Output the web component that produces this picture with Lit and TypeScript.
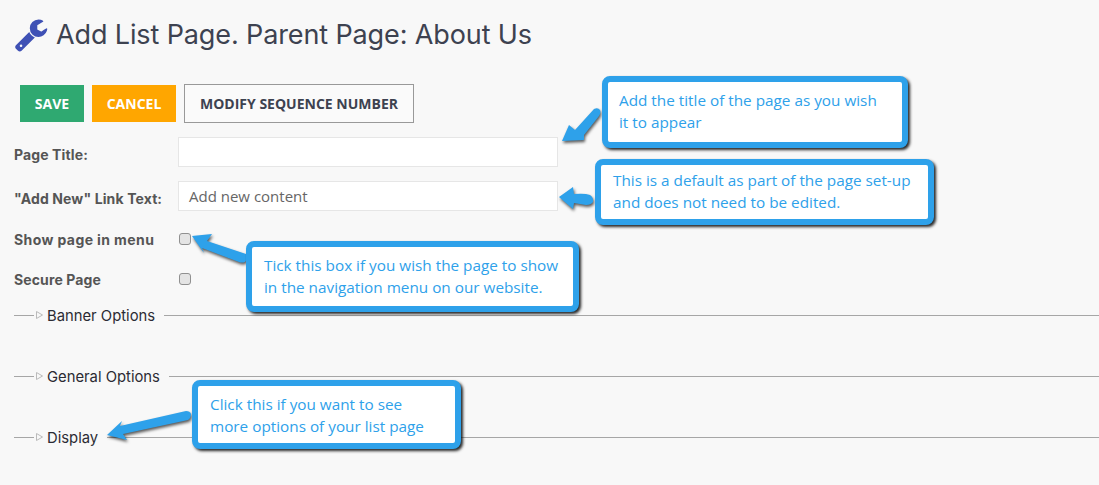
import { LitElement, html, css, svg } from "lit";
import { customElement } from "lit/decorators.js";

const WRENCH = "M424 1472q0-26-19-45t-45-19-45 19-19 45 19 45 45 19 45-19 19-45zm644-420l-682 682q-37 37-90 37-52 0-91-37l-106-108q-38-36-38-90 0-53 38-91l681-681q39 98 114.5 173.5t173.5 114.5zm634-435q0 39-23 106-47 134-164.5 217.5t-258.5 83.5q-185 0-316.5-131.5t-131.5-316.5 131.5-316.5 316.5-131.5q58 0 121.5 16.5t107.5 46.5q16 11 16 28t-16 28l-293 169v224l193 107q5-3 79-48.5t135.5-81 70.5-35.5q15 0 23.5 10t8.5 25z";

const ARROWS = [
  "M562 141 L569 125 L575 130 L594 109 Q598 107 600 110 Q601 113 599 116 L584 135 L584 140 Z",
  "M559 197 L573 187 L574 194 Q585 193 590 195 Q594 198 593 202 Q591 205 586 205 L574 203 L573 209 Z",
  "M192 236 L212 234 L207 241 L246 254 Q248 259 245 262 Q242 263 239 262 L202 248 L204 253 Z",
  "M107 435 L122 421 L120 426 L186 411 Q190 411 191 414 Q191 418 188 420 L123 434 L127 440 Z",
];

const CALLOUTS = [
  { cls: "c1", lines: ["Add the title of the page as you wish", "it to appear"] },
  { cls: "c2", lines: ["This is a default as part of the page set-up", "and does not need to be edited."] },
  { cls: "c3", lines: ["Tick this box if you wish the page to show", "in the navigation menu on our website."] },
  { cls: "c4", lines: ["Click this if you want to see", "more options of your list page"] },
];

@customElement("app-root")
export class AppRoot extends LitElement {
  static styles = css`
    :host {
      display: block;
      position: relative;
      width: 1099px;
      height: 485px;
      overflow: hidden;
      background: #f8f8f8;
      font-family: "Inter", "Liberation Sans", sans-serif;
      color: #444;
    }
    .page { display: flex; flex-direction: column; padding: 0 0 0 14px; }
    .head { display: flex; align-items: center; height: 34px; margin-top: 17px; gap: 7px; }
    .wrench { width: 35px; height: 35px; fill: #3f51b5; flex: none; }
    h1 {
      margin: 0;
      font-size: 27px;
      font-weight: 400;
      color: #3d4250;
      letter-spacing: -0.12px;
      white-space: nowrap;
    }
    .buttons { display: flex; align-items: center; gap: 8px; margin: 33px 0 0 6px; height: 39px; }
    .btn {
      display: flex;
      align-items: center;
      justify-content: center;
      box-sizing: border-box;
      font-family: "Open Sans", sans-serif;
      font-weight: 700;
      font-size: 14px;
      height: 37px;
      color: #fff;
    }
    .save { width: 64px; background: #2fa971; }
    .cancel { width: 84px; background: #ffa600; }
    .modify { width: 230px; height: 39px; color: #3d4250; border: 1px solid #999; background: #fafafa; }
    .row { display: flex; align-items: center; }
    .label { width: 164px; font-size: 14px; letter-spacing: 0.12px; font-weight: 700; color: #555; white-space: nowrap; flex: none; }
    .low { padding-top: 5px; }
    .high { padding-bottom: 2px; }
    .wide { letter-spacing: 0.4px; }
    .input {
      box-sizing: border-box;
      width: 380px;
      height: 30px;
      border: 1px solid #e6e6e6;
      background: #fff;
      padding: 0 10px;
      font-family: "Open Sans", sans-serif;
      font-size: 15px;
      line-height: 28px;
      color: #666;
    }
    .r1 { margin-top: 14px; }
    .r2 { margin-top: 14px; }
    .r3 { margin-top: 11px; height: 36px; }
    .r4 { margin-top: 4px; height: 36px; }
    .check {
      box-sizing: border-box;
      width: 12px;
      height: 12px;
      margin: 0 0 3px 1px;
      border: 1px solid #909090;
      border-radius: 3px;
      background: #e4e4e4;
      appearance: none;
    }
    .divider { display: flex; align-items: center; height: 20px; }
    .d1 { margin-top: 7px; }
    .d2 { margin-top: 41px; }
    .d3 { margin-top: 41px; }
    .rule { height: 1px; background: #a6a6a6; }
    .rule.short { width: 20px; flex: none; }
    .rule.long { flex: 1; margin-left: 9px; }
    .tri { width: 9px; height: 10px; margin: 0 3px 0 1px; flex: none; fill: none; stroke: #bbb; }
    .legend { font-size: 14.8px; color: #2b2b33; white-space: nowrap; padding-top: 1px; line-height: 18px; }
    .arrows { position: absolute; left: 0; top: 0; width: 1099px; height: 485px; pointer-events: none; }
    .arrows path { fill: #2ea1ea; filter: drop-shadow(1.5px 2px 1.5px rgba(0,0,0,.65)); }
    .callout {
      position: absolute;
      box-sizing: border-box;
      border: 6px solid #2ea1ea;
      border-radius: 8px;
      background: #fff;
      box-shadow: 2px 2px 3px rgba(0,0,0,.85);
      font-family: "Open Sans", sans-serif;
      font-size: 15.3px;
      line-height: 22px;
      color: #2ea1ea;
      white-space: nowrap;
    }
    .c1 { left: 602px; top: 76px; width: 306px; height: 72px; padding: 7px 0 0 11px; }
    .c2 { left: 595px; top: 159px; width: 339px; height: 66px; padding: 4px 0 0 12px; }
    .c3 { left: 246px; top: 241px; width: 333px; height: 71px; padding: 7px 0 0 12px; }
    .c4 { left: 192px; top: 380px; width: 269px; height: 69px; padding: 7px 0 0 12px; }
  `;

  private divider(text: string, cls: string) {
    return html`<div class="divider ${cls}">
      <div class="rule short"></div>
      <svg class="tri" viewBox="0 0 9 10"><path d="M1.5 1.5 L7.5 5 L1.5 8.5 Z"></path></svg>
      <div class="legend">${text}</div>
      <div class="rule long"></div>
    </div>`;
  }

  render() {
    return html`
      <div class="page">
        <div class="head">
          <svg class="wrench" viewBox="0 0 1792 1792"><path d="${WRENCH}"></path></svg>
          <h1>Add List Page. Parent Page: About Us</h1>
        </div>
        <div class="buttons">
          <div class="btn save">SAVE</div>
          <div class="btn cancel">CANCEL</div>
          <div class="btn modify">MODIFY SEQUENCE NUMBER</div>
        </div>
        <div class="row r1"><div class="label low">Page Title:</div><div class="input"></div></div>
        <div class="row r2"><div class="label low">"Add New" Link Text:</div><div class="input">Add new content</div></div>
        <div class="row r3"><div class="label high wide">Show page in menu</div><input class="check" type="checkbox" /></div>
        <div class="row r4"><div class="label high">Secure Page</div><input class="check" type="checkbox" /></div>
        ${this.divider("Banner Options", "d1")}
        ${this.divider("General Options", "d2")}
        ${this.divider("Display", "d3")}
      </div>
      <svg class="arrows" viewBox="0 0 1099 485">
        ${ARROWS.map((d) => svg`<path d="${d}"></path>`)}
      </svg>
      ${CALLOUTS.map(
        (c) => html`<div class="callout ${c.cls}">${c.lines.map((l) => html`<div>${l}</div>`)}</div>`
      )}
    `;
  }
}
